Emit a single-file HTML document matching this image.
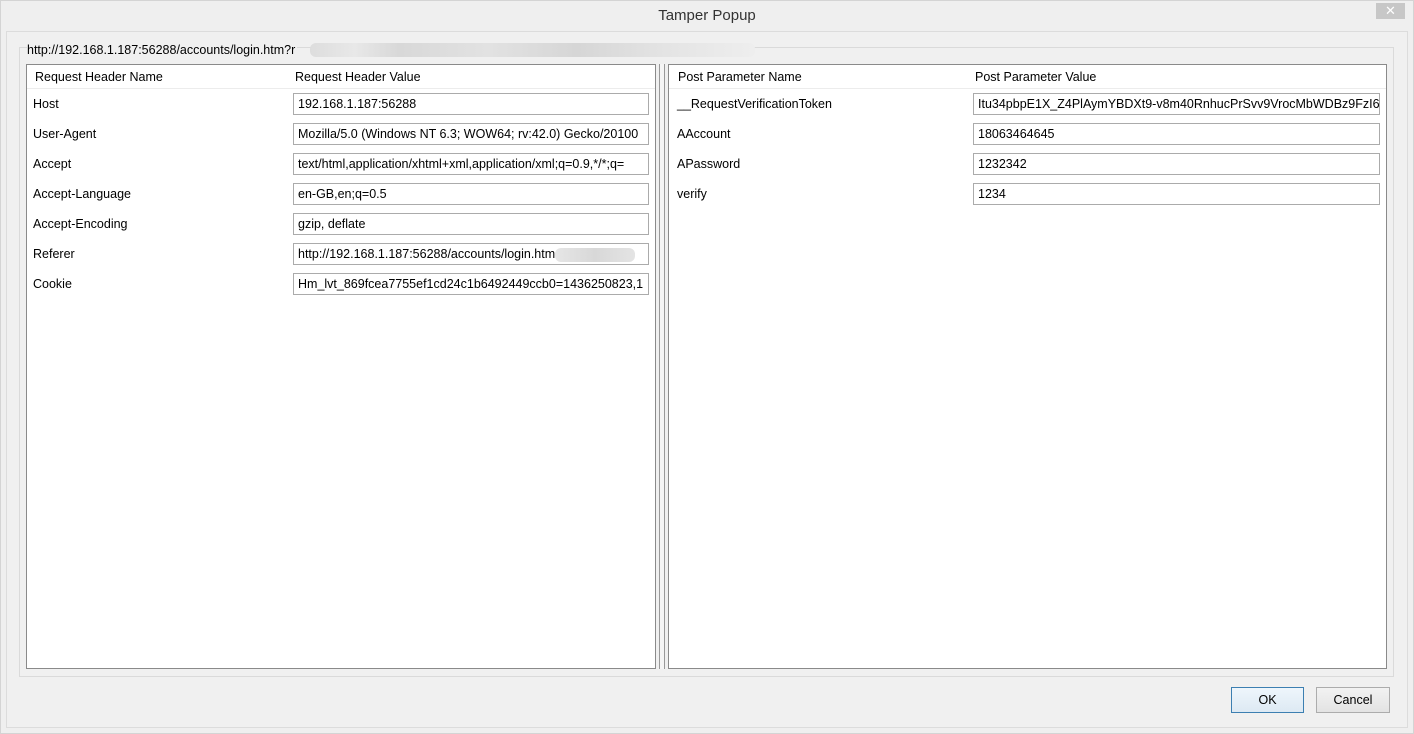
<!DOCTYPE html>
<html><head><meta charset="utf-8"><style>
*{box-sizing:border-box;margin:0;padding:0}
body{width:1414px;height:734px;background:#f0f0f0;font-family:"Liberation Sans",sans-serif;font-size:12.5px;color:#000;position:relative;overflow:hidden}
.abs{position:absolute}
.win{left:0;top:0;width:1414px;height:734px;border:1px solid #d4d4d4;background:#efefef}
.title{left:0;top:0;width:1414px;height:31px;text-align:center;line-height:31px;font-size:15px;color:#333}
.close{left:1376px;top:3px;width:29px;height:16px;background:#c7c7c7;color:#fff;text-align:center;line-height:16px;font-size:13px}
.inner{left:6px;top:31px;width:1402px;height:697px;border:1px solid #dcdcdc;background:#f0f0f0}
.group{left:19px;top:47px;width:1375px;height:630px;border:1px solid #dadada;background:#f0f0f0}
.url{left:27px;top:42px;height:16px;line-height:16px;background:#f0f0f0;padding-right:2px}
.blur{left:310px;top:43px;width:445px;height:14px;background:linear-gradient(90deg,#ddd,#e8e8e8 10%,#d8d8d8 20%,#e2e2e2 40%,#d6d6d6 60%,#e4e4e4 80%,#eee);border-radius:6px}
.panel{background:#fff;border:1px solid #8a8a8a}
.hdr{position:absolute;top:0;height:24px;line-height:24px;border-bottom:1px solid #ececec;width:100%}
.hdr span{position:absolute}
.row{position:absolute;height:22px;line-height:22px}
.box{position:absolute;height:22px;line-height:20px;border:1px solid #ababab;padding-left:4px;white-space:nowrap;overflow:hidden;background:#fff}
.split{left:659px;top:64px;width:6px;height:605px;border-left:1px solid #999;border-right:1px solid #999;background:#f5f5f5}
.btn{height:26px;line-height:24px;text-align:center;background:linear-gradient(#f2f2f2,#e3e3e3);border:1px solid #acacac}
</style></head><body>
<div class="abs win"></div>
<div class="abs title">Tamper Popup</div>
<div class="abs close">✕</div>
<div class="abs inner"></div>
<div class="abs group"></div>
<div class="abs url">http://192.168.1.187:56288/accounts/login.htm?r</div>
<div class="abs blur"></div>

<div class="abs panel" style="left:26px;top:64px;width:630px;height:605px">
 <div class="hdr"><span style="left:8px">Request Header Name</span><span style="left:268px">Request Header Value</span></div>
 <div class="row" style="left:6px;top:28px">Host</div>
 <div class="row" style="left:6px;top:58px">User-Agent</div>
 <div class="row" style="left:6px;top:88px">Accept</div>
 <div class="row" style="left:6px;top:118px">Accept-Language</div>
 <div class="row" style="left:6px;top:148px">Accept-Encoding</div>
 <div class="row" style="left:6px;top:178px">Referer</div>
 <div class="row" style="left:6px;top:208px">Cookie</div>
 <div class="box" style="left:266px;top:28px;width:356px">192.168.1.187:56288</div>
 <div class="box" style="left:266px;top:58px;width:356px">Mozilla/5.0 (Windows NT 6.3; WOW64; rv:42.0) Gecko/20100</div>
 <div class="box" style="left:266px;top:88px;width:356px">text/html,application/xhtml+xml,application/xml;q=0.9,*/*;q=</div>
 <div class="box" style="left:266px;top:118px;width:356px">en-GB,en;q=0.5</div>
 <div class="box" style="left:266px;top:148px;width:356px">gzip, deflate</div>
 <div class="box" style="left:266px;top:178px;width:356px">http://192.168.1.187:56288/accounts/login.htm<span style="display:inline-block;width:80px;height:14px;vertical-align:middle;background:linear-gradient(90deg,#e6e6e6,#d8d8d8,#e4e4e4);border-radius:6px"></span></div>
 <div class="box" style="left:266px;top:208px;width:356px">Hm_lvt_869fcea7755ef1cd24c1b6492449ccb0=1436250823,1</div>
</div>
<div class="abs split"></div>
<div class="abs panel" style="left:668px;top:64px;width:719px;height:605px">
 <div class="hdr"><span style="left:9px">Post Parameter Name</span><span style="left:306px">Post Parameter Value</span></div>
 <div class="row" style="left:8px;top:28px">__RequestVerificationToken</div>
 <div class="row" style="left:8px;top:58px">AAccount</div>
 <div class="row" style="left:8px;top:88px">APassword</div>
 <div class="row" style="left:8px;top:118px">verify</div>
 <div class="box" style="left:304px;top:28px;width:407px">Itu34pbpE1X_Z4PlAymYBDXt9-v8m40RnhucPrSvv9VrocMbWDBz9FzI6</div>
 <div class="box" style="left:304px;top:58px;width:407px">18063464645</div>
 <div class="box" style="left:304px;top:88px;width:407px">1232342</div>
 <div class="box" style="left:304px;top:118px;width:407px">1234</div>
</div>
<div class="abs btn" style="left:1231px;top:687px;width:73px;border-color:#3c7fb1;background:linear-gradient(#eef6fc,#dde9f3)">OK</div>
<div class="abs btn" style="left:1316px;top:687px;width:74px">Cancel</div>
</body></html>
